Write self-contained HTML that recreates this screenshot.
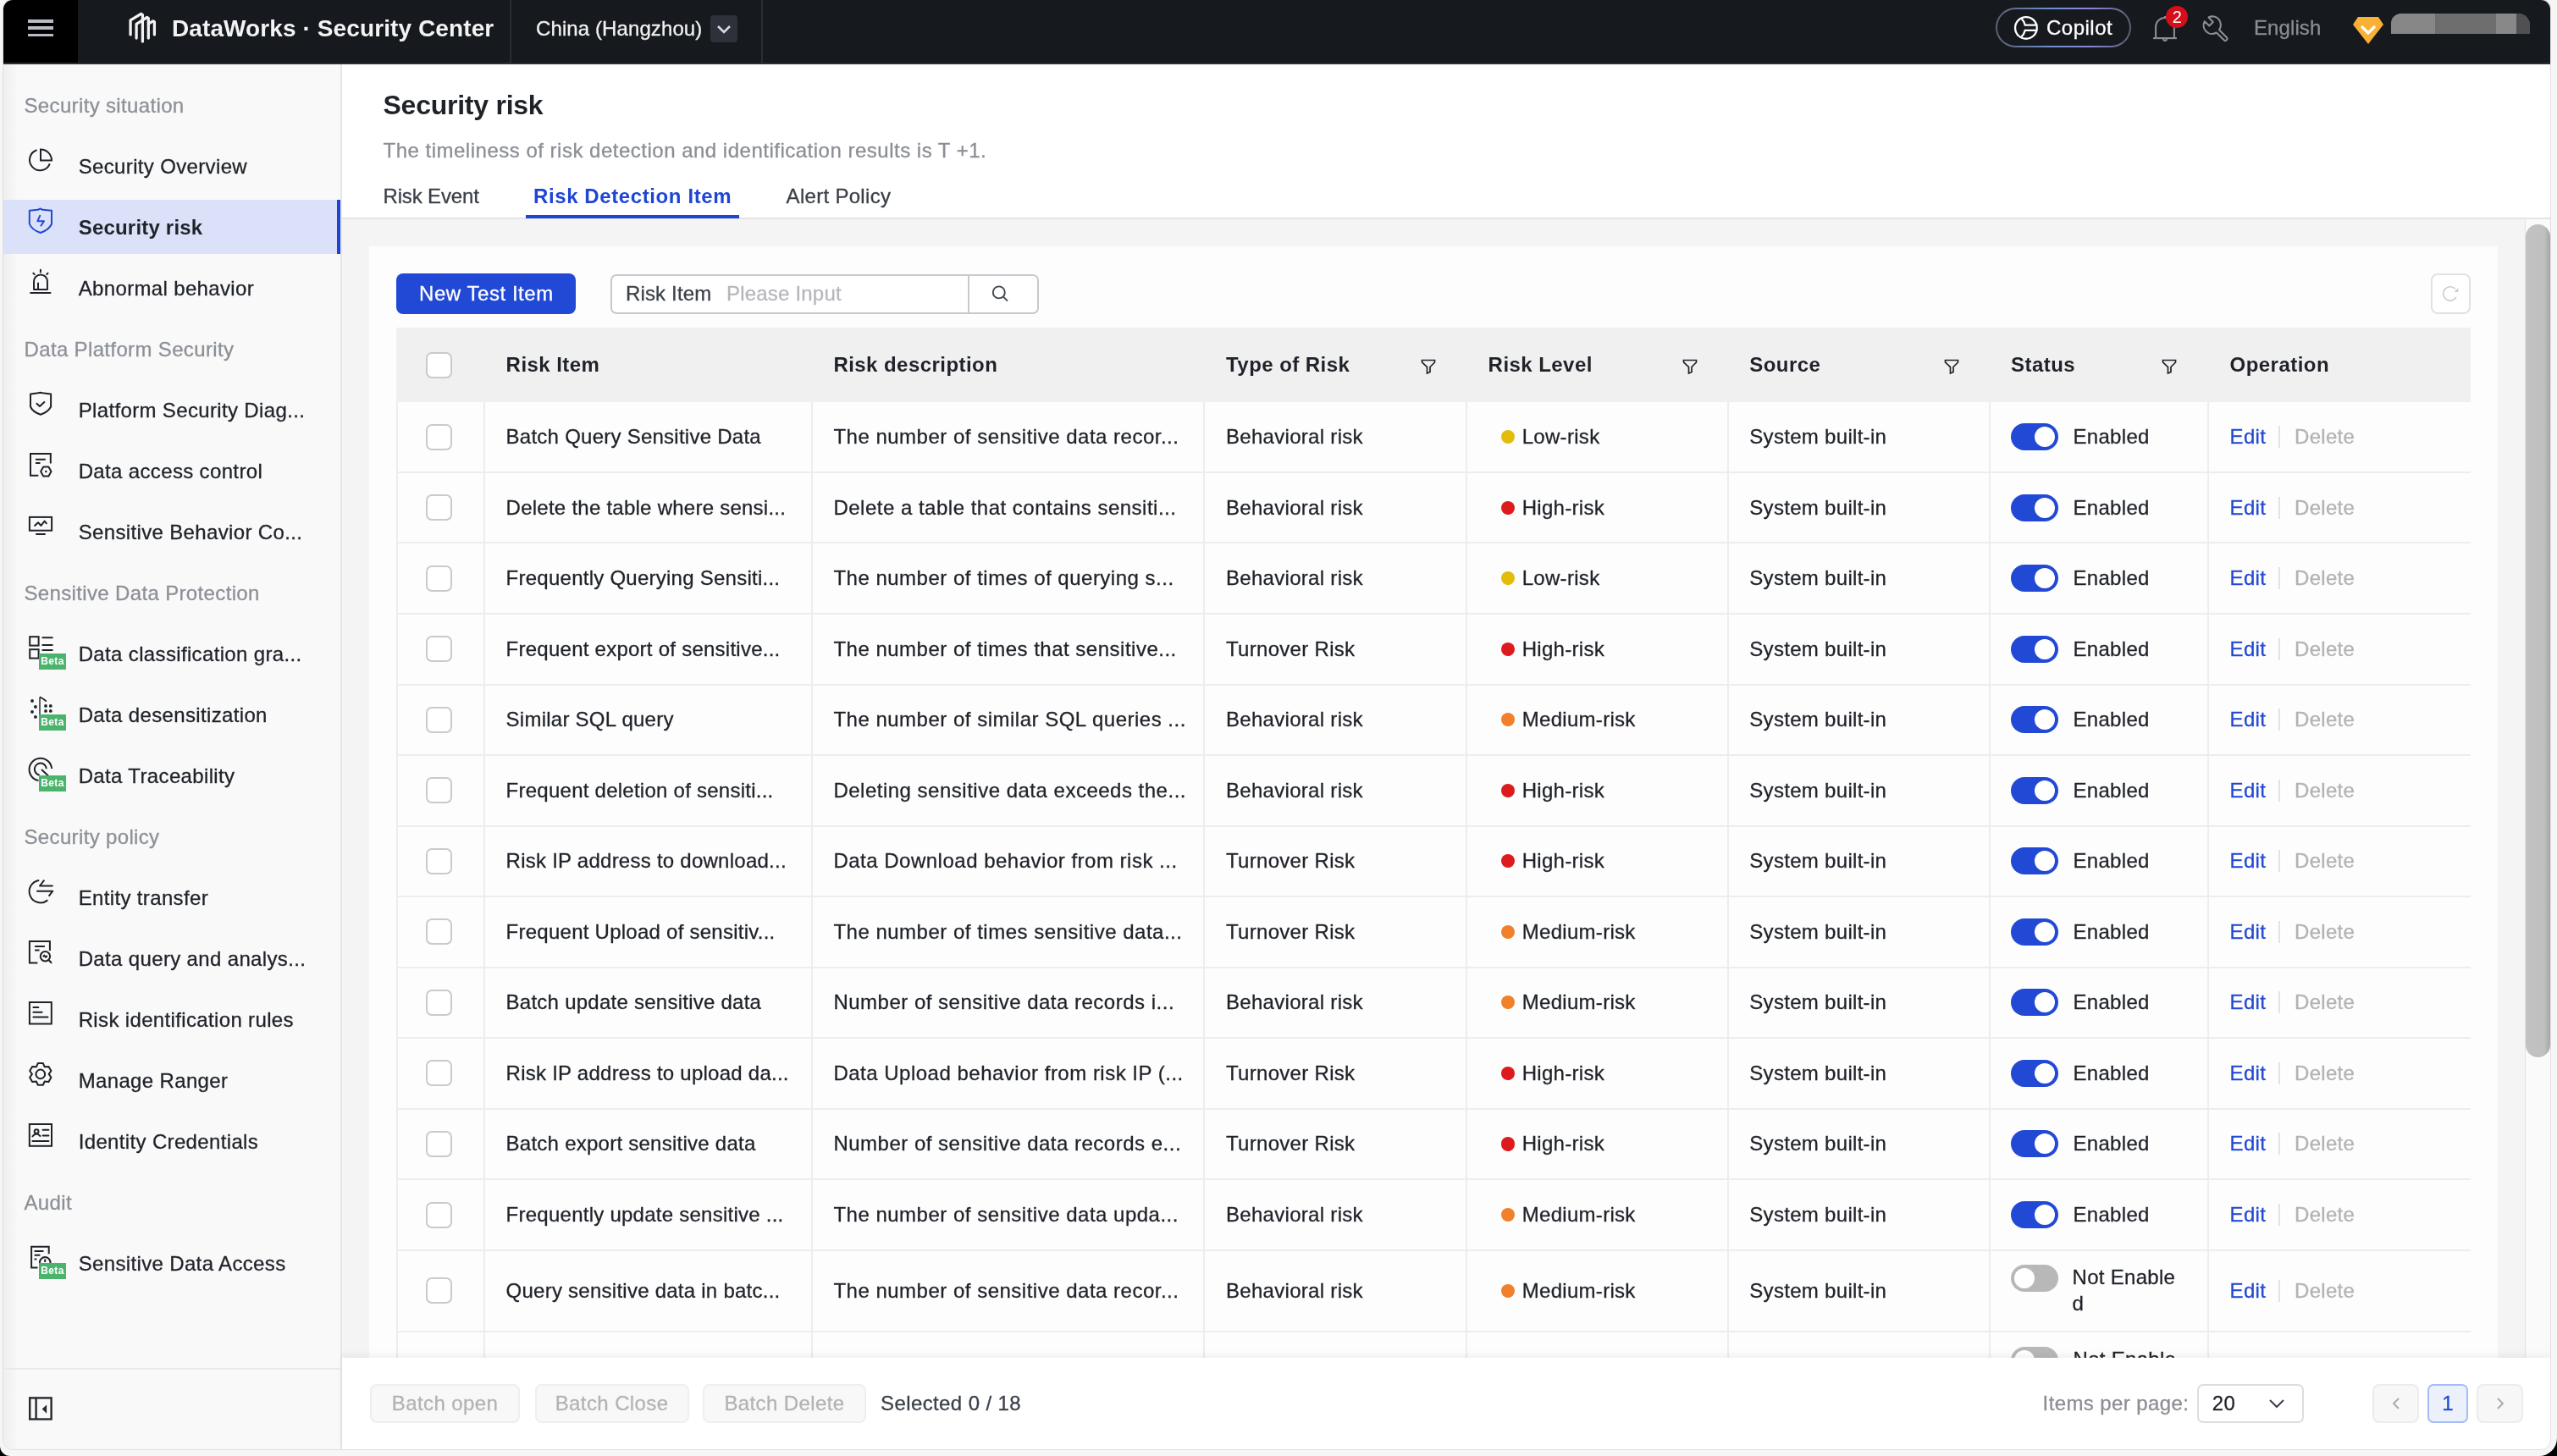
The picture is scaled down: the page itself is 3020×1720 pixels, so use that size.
<!DOCTYPE html><html><head><meta charset="utf-8"><title>DataWorks Security Center</title><style>
*{box-sizing:border-box;margin:0;padding:0}
html,body{width:3020px;height:1720px;overflow:hidden;background:#000;font-family:"Liberation Sans",sans-serif;color:#1f2329}
.a{position:absolute}
.frame{position:absolute;left:0;top:0;width:3020px;height:1720px;background:#f6f6f6;border-radius:0 0 21px 12px}
.wedge{position:absolute;left:3px;top:-2px;width:3010px;height:1715px;border-radius:12px;border:1px solid rgba(0,0,0,.09)}
.win{position:absolute;left:0;top:0;width:3012px;height:1712px;background:#fff;clip-path:inset(0 0 0 4px round 11px);overflow:hidden;will-change:transform}
.t{position:absolute;white-space:nowrap;line-height:30px;height:30px;-webkit-text-stroke:.3px currentColor}
.t.b{-webkit-text-stroke:0}
.top{position:absolute;left:0;top:0;width:3012px;height:76px;background:#16191e;border-bottom:2px solid #2b2e34}
.side{position:absolute;left:4px;top:76px;width:400px;height:1636px;background:#f9f9f9;border-right:2px solid #e4e5e8}
.s24{font-size:24px;letter-spacing:.35px}
.hd{color:#8c9097}
.it{color:#1f2329}
.main{position:absolute;left:403px;top:76px;width:2609px;height:1636px;background:#f4f4f4}
.card{position:absolute;left:436px;top:291px;width:2514px;height:1400px;background:#fdfdfd}
.row{position:absolute;left:468px;width:2450px;border-bottom:2px solid #ededed;border-left:2px solid #ededed}
.vl{position:absolute;top:0;bottom:0;width:2px;background:#ededed}
.cb{position:absolute;width:31px;height:31px;border:2px solid #c8cad0;border-radius:7px;background:#fff}
.tog{position:absolute;width:56px;height:32px;border-radius:16px;background:#2249d5}
.tog:after{content:"";position:absolute;top:4px;left:28px;width:24px;height:24px;border-radius:12px;background:#fff}
.tog.off{background:#b8b8b8}
.tog.off:after{left:4px}
.dot{position:absolute;width:16.2px;height:16.2px;border-radius:9px}
.low{background:#e2bc09}.high{background:#dd1a1e}.med{background:#f0802a}
.edit{color:#2249d5}.del{color:#b3b3b3}
.sep{position:absolute;width:2px;height:26px;background:#e3e3e3}
.btn{position:absolute;border:2px solid #eeeeee;background:#f8f8f8;border-radius:8px;color:#b4b4b4}
</style></head><body>
<div class="frame"></div><div class="wedge"></div><div class="win">
<div class="top">
<div class="a" style="left:0;top:0;width:92px;height:74px;background:#000"></div>
<div class="a" style="left:33px;top:23px;width:30px;height:3.5px;background:#b9bdc3"></div>
<div class="a" style="left:33px;top:31px;width:30px;height:3.5px;background:#b9bdc3"></div>
<div class="a" style="left:33px;top:39.5px;width:30px;height:3.5px;background:#b9bdc3"></div>
<svg class="a" style="left:140px;top:6px" width="54" height="50" viewBox="140 6 54 50" fill="none" stroke="#f2f2f2" stroke-width="3.3" stroke-linecap="round" stroke-linejoin="round">
<path d="M154.1 40.9 V23.8 L166.6 16.3 L168.4 17.6 V49.1"/><path d="M161.1 45 V28.4 L168.4 24"/><path d="M168.4 23.8 L173.6 20.5 L175.3 21.6 V45"/><path d="M175.3 28.2 L180.8 24.8 L182.4 25.8 V40.9"/></svg>
<div class="t s24 b" style="left:203px;top:16.00px;line-height:36px;height:36px;font-size:28px;font-weight:bold;color:#f3f3f3;letter-spacing:.1px">DataWorks · Security Center</div>
<div class="a" style="left:602px;top:0;width:2px;height:74px;background:#2a2d33"></div>
<div class="t s24" style="left:633px;top:18.50px;line-height:30px;height:30px;font-size:24px;color:#f2f2f2;letter-spacing:.1px">China (Hangzhou)</div>
<div class="a" style="left:839px;top:18px;width:32px;height:32px;background:#2d3139;border-radius:4px"></div>
<svg class="a" style="left:839px;top:18px" width="32" height="32" viewBox="0 0 32 32" fill="none" stroke="#d9dadd" stroke-width="2.6"><path d="M9 13 L16 20 L23 13"/></svg>
<div class="a" style="left:899px;top:0;width:2px;height:74px;background:#2a2d33"></div>
<div class="a" style="left:2357px;top:9px;width:160px;height:47px;border-radius:24px;background:linear-gradient(90deg,#5a6070,#6f8fd0 40%,#8b86d8 70%,#5a6070);"></div>
<div class="a" style="left:2359px;top:11px;width:156px;height:43px;border-radius:22px;background:#16191e"></div>
<svg class="a" style="left:2370px;top:12px" width="50" height="42" viewBox="2370 12 50 42" fill="none" stroke="#fff" stroke-width="2.3"><circle cx="2392.9" cy="32.9" r="12.85"/><path d="M2387.6 22 A15.5 15.5 0 0 1 2391.7 29.6 H2406.2 M2406.2 35.9 H2391.7 A15.5 15.5 0 0 1 2387.4 43.4"/></svg>
<div class="t s24" style="left:2417px;top:18.00px;line-height:30px;height:30px;font-size:24px;color:#fff;letter-spacing:.5px">Copilot</div>
<svg class="a" style="left:2535px;top:4px" width="105" height="52" viewBox="2535 4 105 52" fill="none" stroke="#8a8e95" stroke-width="2.1"><path d="M2546.1 44.7 V31.8 A10.9 10.9 0 0 1 2567.9 31.8 V44.7"/><path d="M2543 45.1 H2570.9"/><path d="M2555.1 46 A1.9 1.9 0 0 0 2558.9 46"/><path d="M2557 19 V21"/>
<path d="M2608.5 20.4 L2613.8 25.9 L2609.3 30.5 L2603.8 25.2 A10 10 0 0 0 2617.75 38.5 L2626.9 47.6 A2.3 2.3 0 0 0 2630.1 44.4 L2621 35.25 A10 10 0 0 0 2608.5 20.4 Z" stroke-linejoin="round"/></svg>
<div class="a" style="left:2558.2px;top:7.1px;width:25.8px;height:25.8px;border-radius:13px;background:#d50f1a;color:#fff;font-size:20px;line-height:26px;text-align:center;text-indent:0.5px">2</div>
<div class="t s24" style="left:2662px;top:18.00px;line-height:30px;height:30px;font-size:24px;color:#8a8d93;letter-spacing:.1px">English</div>
<svg class="a" style="left:2778px;top:19px" width="38" height="34" viewBox="0 0 38 34"><path d="M7 1 H31 L37 10 L19 33 L1 10 Z" fill="#f9b035"/><path d="M11 12 L19 20 L27 12" fill="none" stroke="#fff" stroke-width="3.2"/></svg>
<div class="a" style="left:2824px;top:15.5px;width:164px;height:24.5px;border-radius:12px 14px 0 0;overflow:hidden;background:#6f7072"><div class="a" style="left:0;top:0;width:52px;height:25px;background:#878787"></div><div class="a" style="left:52px;top:0;width:72px;height:25px;background:#6e6e6f"></div><div class="a" style="left:124px;top:0;width:24px;height:25px;background:#888"></div><div class="a" style="left:148px;top:0;width:16px;height:25px;background:#505052"></div></div>
</div>
<div class="side"></div>
<div class="a" style="left:4px;top:76px;width:18px;height:1636px;background:linear-gradient(90deg,rgba(0,0,0,.045),rgba(0,0,0,0))"></div>
<div class="t s24 hd" style="left:28.5px;top:109.50px;line-height:30px;height:30px;">Security situation</div>
<div class="t s24 it" style="left:92.7px;top:181.50px;line-height:30px;height:30px;">Security Overview</div>
<div class="a" style="left:4px;top:235.9px;width:394px;height:64px;background:#dae1f8"></div>
<div class="a" style="left:398px;top:235.9px;width:4.3px;height:64px;background:#1f43d3"></div>
<div class="t s24 b" style="left:92.7px;top:253.50px;line-height:30px;height:30px;font-weight:bold;color:#1f2329;letter-spacing:.2px">Security risk</div>
<div class="t s24 it" style="left:92.7px;top:325.50px;line-height:30px;height:30px;">Abnormal behavior</div>
<div class="t s24 hd" style="left:28.5px;top:397.50px;line-height:30px;height:30px;">Data Platform Security</div>
<div class="t s24 it" style="left:92.7px;top:469.50px;line-height:30px;height:30px;">Platform Security Diag...</div>
<div class="t s24 it" style="left:92.7px;top:541.50px;line-height:30px;height:30px;">Data access control</div>
<div class="t s24 it" style="left:92.7px;top:613.50px;line-height:30px;height:30px;">Sensitive Behavior Co...</div>
<div class="t s24 hd" style="left:28.5px;top:685.50px;line-height:30px;height:30px;">Sensitive Data Protection</div>
<div class="t s24 it" style="left:92.7px;top:757.50px;line-height:30px;height:30px;">Data classification gra...</div>
<div class="t s24 it" style="left:92.7px;top:829.50px;line-height:30px;height:30px;">Data desensitization</div>
<div class="t s24 it" style="left:92.7px;top:901.50px;line-height:30px;height:30px;">Data Traceability</div>
<div class="t s24 hd" style="left:28.5px;top:973.50px;line-height:30px;height:30px;">Security policy</div>
<div class="t s24 it" style="left:92.7px;top:1045.50px;line-height:30px;height:30px;">Entity transfer</div>
<div class="t s24 it" style="left:92.7px;top:1117.50px;line-height:30px;height:30px;">Data query and analys...</div>
<div class="t s24 it" style="left:92.7px;top:1189.50px;line-height:30px;height:30px;">Risk identification rules</div>
<div class="t s24 it" style="left:92.7px;top:1261.50px;line-height:30px;height:30px;">Manage Ranger</div>
<div class="t s24 it" style="left:92.7px;top:1333.50px;line-height:30px;height:30px;">Identity Credentials</div>
<div class="t s24 hd" style="left:28.5px;top:1405.50px;line-height:30px;height:30px;">Audit</div>
<div class="t s24 it" style="left:92.7px;top:1477.50px;line-height:30px;height:30px;">Sensitive Data Access</div>
<svg class="a" style="left:0;top:0" width="100" height="1712" viewBox="0 0 100 1712" fill="none" stroke="#1f2329" stroke-width="2" stroke-linejoin="round">
<path d="M43.56 177.18 A12.3 12.3 0 1 0 58.78 193.3"/>
<path d="M48 176.6 V189.6 H61 A13 13 0 0 0 48 176.6 Z" stroke-linejoin="miter"/>
<g stroke="#2249d5"><path d="M34.8 248.8 L44.7 247.8 L47.6 246.5 L50.3 247.8 L61 248.8 V264.5 Q58 271.5 47.8 275 Q37.5 271.5 34.8 264.5 Z"/><path d="M47.5 254.2 L44.4 261.2 H52 L48 267.2"/></g>
<path d="M40.05 342 V332.4 A7.95 7.95 0 0 1 55.95 332.4 V342 Z M45 334.6 V342 M36.1 346 H59.5 M47.9 318.8 V321.4 M39.4 322.8 L40.7 324.1 M56.5 322.8 L55.2 324.1" stroke-linecap="round"/>
<path d="M36 465.4 L45 464.3 L47.6 463.7 L50.3 464.3 L60.1 465.4 V480.5 Q57 486.5 47.9 489.8 Q38.6 486.5 36 480.5 Z"/>
<path d="M42.9 476.2 L46.9 479.9 L52.9 474.4"/>
<path d="M45.3 561.8 H36 V535.9 H59.8 V547.6 M42 542.7 H53.8 M42 546.9 H47.5" stroke-linejoin="miter"/>
<path d="M60.5 557 L57.4 562.4 L51.2 562.4 L48.1 557 L51.2 551.6 L57.4 551.6 Z"/>
<circle cx="54.3" cy="557" r="1.3" fill="#1f2329" stroke="none"/>
<rect x="34.9" y="610.9" width="26.2" height="15.8" stroke-linejoin="miter"/>
<path d="M42.2 631 H53.7 M40.5 621.5 L45 617.2 L48.4 620.9 L52.6 615.6 L55.3 618.9"/>
<rect x="35.2" y="752.2" width="10.4" height="10.4" stroke-linejoin="miter"/><rect x="35.2" y="767.2" width="10.4" height="10.4" stroke-linejoin="miter"/>
<path d="M50.3 753.3 H61.8 M50.3 761.9 H61.8 M50.3 768.1 H61.8" stroke-linecap="round"/>
<g fill="#1f2329" stroke="none"><circle cx="38" cy="828" r="1.9"/><circle cx="41.9" cy="835" r="1.9"/><circle cx="38" cy="840.9" r="1.9"/><circle cx="41.9" cy="846.9" r="1.9"/><circle cx="54" cy="833.9" r="1.9"/><circle cx="59.8" cy="833.9" r="1.9"/><circle cx="54" cy="839.9" r="1.9"/><circle cx="59.8" cy="839.9" r="1.9"/></g>
<path d="M47 823.4 V850" stroke="#44474d" stroke-width="1.7"/><path d="M47 823.4 L49.5 824.8 L52 826.2 L54.8 828.6" stroke-width="1.8"/>
<path d="M61.1 908 A13.3 13.3 0 1 0 45.5 922.1 M54.8 908.2 A7 7 0 1 0 46.6 915.5 M49 909 L57 916.5"/>
<path d="M46.2 1039.9 A13.3 13.3 0 1 0 56.3 1063.4 M62.6 1046.5 H47 L52.3 1039.7 M43.2 1052.7 H62.3 L57.6 1058.7"/>
<path d="M44.4 1137.5 H34.9 V1112 H58.9 V1122.9 M41.1 1118 H52.9 M41.1 1122.4 H46.5" stroke-linejoin="miter"/>
<circle cx="53.4" cy="1129.8" r="5.7"/><path d="M57.5 1134 L61 1137.8 M50.8 1130.2 L52.2 1128.6 L54 1130.8 L55.8 1129" />
<rect x="34.9" y="1184" width="25.9" height="25.5" stroke-linejoin="miter"/><path d="M39.4 1189.9 H45.3 M39.4 1195.8 H49.6 M39.4 1201.5 H56.5" stroke-linecap="round"/>
<path d="M44.83 1256.04 L50.77 1256.04 L52.75 1260.33 L57.45 1259.90 L60.42 1265.04 L57.70 1268.90 L60.42 1272.76 L57.45 1277.90 L52.75 1277.47 L50.77 1281.76 L44.83 1281.76 L42.85 1277.47 L38.15 1277.90 L35.18 1272.76 L37.90 1268.90 L35.18 1265.04 L38.15 1259.90 L42.85 1260.33 Z"/><circle cx="47.8" cy="1268.9" r="5.3"/>
<rect x="34.8" y="1328" width="26.2" height="25.8" stroke-linejoin="miter"/><circle cx="43.1" cy="1336.6" r="2.4"/>
<path d="M38.4 1342.4 Q43 1337 47.4 1342 M50.5 1334.7 H57.4 M50.5 1341.5 H57.4 M38.4 1348.1 H57.4" stroke-linecap="round"/>
<path d="M44.5 1497.4 H37.1 V1472.7 H57.7 V1481.3 M40.6 1478 H51.5 M40.6 1482.7 H47.4 M40.6 1487.5 H43.3" stroke-linejoin="miter"/>
<circle cx="53.2" cy="1491.4" r="6.3"/><path d="M53.2 1487.4 V1491"/>
</svg>
<div class="a" style="left:46.2px;top:772.2px;width:32px;height:18.6px;background:#4bb46c;color:#fff;font-size:12px;font-weight:bold;line-height:18.6px;letter-spacing:.4px;text-indent:2px">Beta</div>
<div class="a" style="left:46.2px;top:844.2px;width:32px;height:18.6px;background:#4bb46c;color:#fff;font-size:12px;font-weight:bold;line-height:18.6px;letter-spacing:.4px;text-indent:2px">Beta</div>
<div class="a" style="left:46.2px;top:916.2px;width:32px;height:18.6px;background:#4bb46c;color:#fff;font-size:12px;font-weight:bold;line-height:18.6px;letter-spacing:.4px;text-indent:2px">Beta</div>
<div class="a" style="left:46.2px;top:1492.2px;width:32px;height:18.6px;background:#4bb46c;color:#fff;font-size:12px;font-weight:bold;line-height:18.6px;letter-spacing:.4px;text-indent:2px">Beta</div>
<div class="a" style="left:4px;top:1616px;width:398px;height:2px;background:#eaeaea"></div>
<svg class="a" style="left:0;top:1640px" width="80" height="50" viewBox="0 1640 80 50" fill="none" stroke="#25282e" stroke-width="2.4"><rect x="35.2" y="1651.4" width="25.4" height="25.1"/><path d="M42.6 1651.4 V1676.5"/><path d="M49.7 1664.4 L55.1 1659.6 V1669.7 Z" fill="#25282e" stroke="none"/></svg>
<div class="a" style="left:404px;top:76px;width:2608px;height:182px;background:#fff"></div>
<div class="a" style="left:404px;top:257px;width:2608px;height:2px;background:#e4e4e4"></div>
<div class="a" style="left:404px;top:259px;width:2578px;height:1345px;background:#f4f4f4"></div>
<div class="t s24 b" style="left:452.5px;top:104.40px;line-height:40px;height:40px;font-size:32px;font-weight:bold;color:#1f2329;letter-spacing:-.25px">Security risk</div>
<div class="t s24" style="left:452.5px;top:163.00px;line-height:30px;height:30px;color:#8b8e95;letter-spacing:.5px">The timeliness of risk detection and identification results is T +1.</div>
<div class="t s24" style="left:452.5px;top:216.50px;line-height:30px;height:30px;color:#3a3f48;letter-spacing:-.15px">Risk Event</div>
<div class="t s24 b" style="left:630px;top:216.50px;line-height:30px;height:30px;font-weight:bold;color:#1f45d5;letter-spacing:.6px">Risk Detection Item</div>
<div class="t s24" style="left:928.6px;top:216.50px;line-height:30px;height:30px;color:#3a3f48;letter-spacing:.3px">Alert Policy</div>
<div class="a" style="left:621px;top:254px;width:252px;height:3.5px;background:#1f45d5"></div>
<div class="a" style="left:2982px;top:259px;width:30px;height:1345px;background:#fafafa;border-left:1.5px solid #e2e2e2"></div>
<div class="a" style="left:2983px;top:265px;width:29px;height:984px;border-radius:15px;background:linear-gradient(90deg,#c2c2c2 0%,#c0c0c0 75%,#a6a6a6 100%)"></div>
<div class="a" style="left:436px;top:291px;width:2514px;height:1313px;background:#fdfdfd"></div>
<div class="a" style="left:468px;top:323px;width:212px;height:48px;border-radius:8px;background:#2249d5"></div>
<div class="t s24" style="left:495px;top:332.00px;line-height:30px;height:30px;color:#fff;letter-spacing:.55px">New Test Item</div>
<div class="a" style="left:721px;top:324px;width:506px;height:47px;border:2px solid #c7c9cf;border-radius:7px;background:#fff"></div>
<div class="a" style="left:1143px;top:324px;width:2px;height:47px;background:#c7c9cf"></div>
<div class="t s24" style="left:739px;top:332.00px;line-height:30px;height:30px;color:#3c414a;letter-spacing:.15px">Risk Item</div>
<div class="t s24" style="left:858px;top:332.00px;line-height:30px;height:30px;color:#b5b7bc;letter-spacing:.2px">Please Input</div>
<svg class="a" style="left:1168px;top:334px" width="26" height="26" viewBox="0 0 26 26" fill="none" stroke="#414651" stroke-width="1.9"><circle cx="11.8" cy="11.4" r="7"/><path d="M16.8 16.4 L22 21.6"/></svg>
<div class="a" style="left:2870.5px;top:323.3px;width:47.3px;height:47.3px;border:2px solid #e0e1e4;border-radius:8px;background:#fff"></div>
<svg class="a" style="left:2880px;top:333px" width="30" height="30" viewBox="2880 333 30 30" fill="none" stroke="#c9cbd0" stroke-width="1.6"><path d="M2899.7 341.1 A8.2 8.2 0 1 0 2901 351"/><path d="M2898.4 345.1 L2903.3 340.3 L2903.3 345.1 Z" fill="#c9cbd0" stroke="none"/></svg>
<div class="a" style="left:468px;top:387px;width:2450px;height:88px;background:#f0f0f0"></div>
<div class="cb" style="left:502.5px;top:415.5px"></div>
<div class="t s24 b" style="left:597.6px;top:416.00px;line-height:30px;height:30px;font-weight:bold;color:#1f2329;letter-spacing:.45px">Risk Item</div>
<div class="t s24 b" style="left:984.4px;top:416.00px;line-height:30px;height:30px;font-weight:bold;color:#1f2329;letter-spacing:.45px">Risk description</div>
<div class="t s24 b" style="left:1448px;top:416.00px;line-height:30px;height:30px;font-weight:bold;color:#1f2329;letter-spacing:.45px">Type of Risk</div>
<div class="t s24 b" style="left:1757.6px;top:416.00px;line-height:30px;height:30px;font-weight:bold;color:#1f2329;letter-spacing:.45px">Risk Level</div>
<div class="t s24 b" style="left:2066.3px;top:416.00px;line-height:30px;height:30px;font-weight:bold;color:#1f2329;letter-spacing:.45px">Source</div>
<div class="t s24 b" style="left:2375px;top:416.00px;line-height:30px;height:30px;font-weight:bold;color:#1f2329;letter-spacing:.45px">Status</div>
<div class="t s24 b" style="left:2633.6px;top:416.00px;line-height:30px;height:30px;font-weight:bold;color:#1f2329;letter-spacing:.45px">Operation</div>
<svg class="a" style="left:1677px;top:423px" width="20" height="20" viewBox="0 0 20 20" fill="none" stroke="#1f2329" stroke-width="1.7" stroke-linejoin="miter"><path d="M2.5 2.5 H17.5 V5 L12 10.5 V16.5 L8.5 18 V10.5 L2.5 5 Z"/></svg>
<svg class="a" style="left:1986px;top:423px" width="20" height="20" viewBox="0 0 20 20" fill="none" stroke="#1f2329" stroke-width="1.7" stroke-linejoin="miter"><path d="M2.5 2.5 H17.5 V5 L12 10.5 V16.5 L8.5 18 V10.5 L2.5 5 Z"/></svg>
<svg class="a" style="left:2295px;top:423px" width="20" height="20" viewBox="0 0 20 20" fill="none" stroke="#1f2329" stroke-width="1.7" stroke-linejoin="miter"><path d="M2.5 2.5 H17.5 V5 L12 10.5 V16.5 L8.5 18 V10.5 L2.5 5 Z"/></svg>
<svg class="a" style="left:2552px;top:423px" width="20" height="20" viewBox="0 0 20 20" fill="none" stroke="#1f2329" stroke-width="1.7" stroke-linejoin="miter"><path d="M2.5 2.5 H17.5 V5 L12 10.5 V16.5 L8.5 18 V10.5 L2.5 5 Z"/></svg>
<div class="a" style="left:0;top:0;width:3012px;height:1604px;overflow:hidden">
<div class="a" style="left:468px;top:475.40px;width:2450px;height:81.53px;background:#fdfdfd"></div>
<div class="a" style="left:468px;top:556.93px;width:2450px;height:2px;background:#ededed"></div>
<div class="cb" style="left:502.5px;top:500.66px"></div>
<div class="t s24" style="left:597.6px;top:501.16px;line-height:30px;height:30px;color:#1f2329;letter-spacing:.25px">Batch Query Sensitive Data</div>
<div class="t s24" style="left:984.4px;top:501.16px;line-height:30px;height:30px;color:#1f2329;letter-spacing:.5px">The number of sensitive data recor...</div>
<div class="t s24" style="left:1448px;top:501.16px;line-height:30px;height:30px;color:#1f2329;letter-spacing:.3px">Behavioral risk</div>
<div class="dot low" style="left:1772.9px;top:508.06px"></div>
<div class="t s24" style="left:1797.7px;top:501.16px;line-height:30px;height:30px;color:#1f2329;letter-spacing:.3px">Low-risk</div>
<div class="t s24" style="left:2066.3px;top:501.16px;line-height:30px;height:30px;color:#1f2329;letter-spacing:.3px">System built-in</div>
<div class="tog" style="left:2375px;top:500.16px"></div>
<div class="t s24" style="left:2448.5px;top:501.16px;line-height:30px;height:30px;color:#1f2329;letter-spacing:.3px">Enabled</div>
<div class="t s24 edit" style="left:2633.6px;top:501.16px;line-height:30px;height:30px;letter-spacing:.3px">Edit</div>
<div class="sep" style="left:2691px;top:503.16px"></div>
<div class="t s24 del" style="left:2710px;top:501.16px;line-height:30px;height:30px;letter-spacing:.3px">Delete</div>
<div class="a" style="left:468px;top:558.93px;width:2450px;height:81.53px;background:#fdfdfd"></div>
<div class="a" style="left:468px;top:640.46px;width:2450px;height:2px;background:#ededed"></div>
<div class="cb" style="left:502.5px;top:584.19px"></div>
<div class="t s24" style="left:597.6px;top:584.69px;line-height:30px;height:30px;color:#1f2329;letter-spacing:.25px">Delete the table where sensi...</div>
<div class="t s24" style="left:984.4px;top:584.69px;line-height:30px;height:30px;color:#1f2329;letter-spacing:.5px">Delete a table that contains sensiti...</div>
<div class="t s24" style="left:1448px;top:584.69px;line-height:30px;height:30px;color:#1f2329;letter-spacing:.3px">Behavioral risk</div>
<div class="dot high" style="left:1772.9px;top:591.59px"></div>
<div class="t s24" style="left:1797.7px;top:584.69px;line-height:30px;height:30px;color:#1f2329;letter-spacing:.3px">High-risk</div>
<div class="t s24" style="left:2066.3px;top:584.69px;line-height:30px;height:30px;color:#1f2329;letter-spacing:.3px">System built-in</div>
<div class="tog" style="left:2375px;top:583.69px"></div>
<div class="t s24" style="left:2448.5px;top:584.69px;line-height:30px;height:30px;color:#1f2329;letter-spacing:.3px">Enabled</div>
<div class="t s24 edit" style="left:2633.6px;top:584.69px;line-height:30px;height:30px;letter-spacing:.3px">Edit</div>
<div class="sep" style="left:2691px;top:586.69px"></div>
<div class="t s24 del" style="left:2710px;top:584.69px;line-height:30px;height:30px;letter-spacing:.3px">Delete</div>
<div class="a" style="left:468px;top:642.46px;width:2450px;height:81.53px;background:#fdfdfd"></div>
<div class="a" style="left:468px;top:723.99px;width:2450px;height:2px;background:#ededed"></div>
<div class="cb" style="left:502.5px;top:667.73px"></div>
<div class="t s24" style="left:597.6px;top:668.23px;line-height:30px;height:30px;color:#1f2329;letter-spacing:.25px">Frequently Querying Sensiti...</div>
<div class="t s24" style="left:984.4px;top:668.23px;line-height:30px;height:30px;color:#1f2329;letter-spacing:.5px">The number of times of querying s...</div>
<div class="t s24" style="left:1448px;top:668.23px;line-height:30px;height:30px;color:#1f2329;letter-spacing:.3px">Behavioral risk</div>
<div class="dot low" style="left:1772.9px;top:675.12px"></div>
<div class="t s24" style="left:1797.7px;top:668.23px;line-height:30px;height:30px;color:#1f2329;letter-spacing:.3px">Low-risk</div>
<div class="t s24" style="left:2066.3px;top:668.23px;line-height:30px;height:30px;color:#1f2329;letter-spacing:.3px">System built-in</div>
<div class="tog" style="left:2375px;top:667.23px"></div>
<div class="t s24" style="left:2448.5px;top:668.23px;line-height:30px;height:30px;color:#1f2329;letter-spacing:.3px">Enabled</div>
<div class="t s24 edit" style="left:2633.6px;top:668.23px;line-height:30px;height:30px;letter-spacing:.3px">Edit</div>
<div class="sep" style="left:2691px;top:670.23px"></div>
<div class="t s24 del" style="left:2710px;top:668.23px;line-height:30px;height:30px;letter-spacing:.3px">Delete</div>
<div class="a" style="left:468px;top:725.99px;width:2450px;height:81.53px;background:#fdfdfd"></div>
<div class="a" style="left:468px;top:807.52px;width:2450px;height:2px;background:#ededed"></div>
<div class="cb" style="left:502.5px;top:751.25px"></div>
<div class="t s24" style="left:597.6px;top:751.75px;line-height:30px;height:30px;color:#1f2329;letter-spacing:.25px">Frequent export of sensitive...</div>
<div class="t s24" style="left:984.4px;top:751.75px;line-height:30px;height:30px;color:#1f2329;letter-spacing:.5px">The number of times that sensitive...</div>
<div class="t s24" style="left:1448px;top:751.75px;line-height:30px;height:30px;color:#1f2329;letter-spacing:.3px">Turnover Risk</div>
<div class="dot high" style="left:1772.9px;top:758.65px"></div>
<div class="t s24" style="left:1797.7px;top:751.75px;line-height:30px;height:30px;color:#1f2329;letter-spacing:.3px">High-risk</div>
<div class="t s24" style="left:2066.3px;top:751.75px;line-height:30px;height:30px;color:#1f2329;letter-spacing:.3px">System built-in</div>
<div class="tog" style="left:2375px;top:750.75px"></div>
<div class="t s24" style="left:2448.5px;top:751.75px;line-height:30px;height:30px;color:#1f2329;letter-spacing:.3px">Enabled</div>
<div class="t s24 edit" style="left:2633.6px;top:751.75px;line-height:30px;height:30px;letter-spacing:.3px">Edit</div>
<div class="sep" style="left:2691px;top:753.75px"></div>
<div class="t s24 del" style="left:2710px;top:751.75px;line-height:30px;height:30px;letter-spacing:.3px">Delete</div>
<div class="a" style="left:468px;top:809.52px;width:2450px;height:81.53px;background:#fdfdfd"></div>
<div class="a" style="left:468px;top:891.05px;width:2450px;height:2px;background:#ededed"></div>
<div class="cb" style="left:502.5px;top:834.78px"></div>
<div class="t s24" style="left:597.6px;top:835.28px;line-height:30px;height:30px;color:#1f2329;letter-spacing:.25px">Similar SQL query</div>
<div class="t s24" style="left:984.4px;top:835.28px;line-height:30px;height:30px;color:#1f2329;letter-spacing:.5px">The number of similar SQL queries ...</div>
<div class="t s24" style="left:1448px;top:835.28px;line-height:30px;height:30px;color:#1f2329;letter-spacing:.3px">Behavioral risk</div>
<div class="dot med" style="left:1772.9px;top:842.18px"></div>
<div class="t s24" style="left:1797.7px;top:835.28px;line-height:30px;height:30px;color:#1f2329;letter-spacing:.3px">Medium-risk</div>
<div class="t s24" style="left:2066.3px;top:835.28px;line-height:30px;height:30px;color:#1f2329;letter-spacing:.3px">System built-in</div>
<div class="tog" style="left:2375px;top:834.28px"></div>
<div class="t s24" style="left:2448.5px;top:835.28px;line-height:30px;height:30px;color:#1f2329;letter-spacing:.3px">Enabled</div>
<div class="t s24 edit" style="left:2633.6px;top:835.28px;line-height:30px;height:30px;letter-spacing:.3px">Edit</div>
<div class="sep" style="left:2691px;top:837.28px"></div>
<div class="t s24 del" style="left:2710px;top:835.28px;line-height:30px;height:30px;letter-spacing:.3px">Delete</div>
<div class="a" style="left:468px;top:893.05px;width:2450px;height:81.53px;background:#fdfdfd"></div>
<div class="a" style="left:468px;top:974.58px;width:2450px;height:2px;background:#ededed"></div>
<div class="cb" style="left:502.5px;top:918.31px"></div>
<div class="t s24" style="left:597.6px;top:918.81px;line-height:30px;height:30px;color:#1f2329;letter-spacing:.25px">Frequent deletion of sensiti...</div>
<div class="t s24" style="left:984.4px;top:918.81px;line-height:30px;height:30px;color:#1f2329;letter-spacing:.5px">Deleting sensitive data exceeds the...</div>
<div class="t s24" style="left:1448px;top:918.81px;line-height:30px;height:30px;color:#1f2329;letter-spacing:.3px">Behavioral risk</div>
<div class="dot high" style="left:1772.9px;top:925.71px"></div>
<div class="t s24" style="left:1797.7px;top:918.81px;line-height:30px;height:30px;color:#1f2329;letter-spacing:.3px">High-risk</div>
<div class="t s24" style="left:2066.3px;top:918.81px;line-height:30px;height:30px;color:#1f2329;letter-spacing:.3px">System built-in</div>
<div class="tog" style="left:2375px;top:917.81px"></div>
<div class="t s24" style="left:2448.5px;top:918.81px;line-height:30px;height:30px;color:#1f2329;letter-spacing:.3px">Enabled</div>
<div class="t s24 edit" style="left:2633.6px;top:918.81px;line-height:30px;height:30px;letter-spacing:.3px">Edit</div>
<div class="sep" style="left:2691px;top:920.81px"></div>
<div class="t s24 del" style="left:2710px;top:918.81px;line-height:30px;height:30px;letter-spacing:.3px">Delete</div>
<div class="a" style="left:468px;top:976.58px;width:2450px;height:81.53px;background:#fdfdfd"></div>
<div class="a" style="left:468px;top:1058.11px;width:2450px;height:2px;background:#ededed"></div>
<div class="cb" style="left:502.5px;top:1001.84px"></div>
<div class="t s24" style="left:597.6px;top:1002.34px;line-height:30px;height:30px;color:#1f2329;letter-spacing:.25px">Risk IP address to download...</div>
<div class="t s24" style="left:984.4px;top:1002.34px;line-height:30px;height:30px;color:#1f2329;letter-spacing:.5px">Data Download behavior from risk ...</div>
<div class="t s24" style="left:1448px;top:1002.34px;line-height:30px;height:30px;color:#1f2329;letter-spacing:.3px">Turnover Risk</div>
<div class="dot high" style="left:1772.9px;top:1009.24px"></div>
<div class="t s24" style="left:1797.7px;top:1002.34px;line-height:30px;height:30px;color:#1f2329;letter-spacing:.3px">High-risk</div>
<div class="t s24" style="left:2066.3px;top:1002.34px;line-height:30px;height:30px;color:#1f2329;letter-spacing:.3px">System built-in</div>
<div class="tog" style="left:2375px;top:1001.34px"></div>
<div class="t s24" style="left:2448.5px;top:1002.34px;line-height:30px;height:30px;color:#1f2329;letter-spacing:.3px">Enabled</div>
<div class="t s24 edit" style="left:2633.6px;top:1002.34px;line-height:30px;height:30px;letter-spacing:.3px">Edit</div>
<div class="sep" style="left:2691px;top:1004.34px"></div>
<div class="t s24 del" style="left:2710px;top:1002.34px;line-height:30px;height:30px;letter-spacing:.3px">Delete</div>
<div class="a" style="left:468px;top:1060.11px;width:2450px;height:81.53px;background:#fdfdfd"></div>
<div class="a" style="left:468px;top:1141.64px;width:2450px;height:2px;background:#ededed"></div>
<div class="cb" style="left:502.5px;top:1085.38px"></div>
<div class="t s24" style="left:597.6px;top:1085.88px;line-height:30px;height:30px;color:#1f2329;letter-spacing:.25px">Frequent Upload of sensitiv...</div>
<div class="t s24" style="left:984.4px;top:1085.88px;line-height:30px;height:30px;color:#1f2329;letter-spacing:.5px">The number of times sensitive data...</div>
<div class="t s24" style="left:1448px;top:1085.88px;line-height:30px;height:30px;color:#1f2329;letter-spacing:.3px">Turnover Risk</div>
<div class="dot med" style="left:1772.9px;top:1092.78px"></div>
<div class="t s24" style="left:1797.7px;top:1085.88px;line-height:30px;height:30px;color:#1f2329;letter-spacing:.3px">Medium-risk</div>
<div class="t s24" style="left:2066.3px;top:1085.88px;line-height:30px;height:30px;color:#1f2329;letter-spacing:.3px">System built-in</div>
<div class="tog" style="left:2375px;top:1084.88px"></div>
<div class="t s24" style="left:2448.5px;top:1085.88px;line-height:30px;height:30px;color:#1f2329;letter-spacing:.3px">Enabled</div>
<div class="t s24 edit" style="left:2633.6px;top:1085.88px;line-height:30px;height:30px;letter-spacing:.3px">Edit</div>
<div class="sep" style="left:2691px;top:1087.88px"></div>
<div class="t s24 del" style="left:2710px;top:1085.88px;line-height:30px;height:30px;letter-spacing:.3px">Delete</div>
<div class="a" style="left:468px;top:1143.64px;width:2450px;height:81.53px;background:#fdfdfd"></div>
<div class="a" style="left:468px;top:1225.17px;width:2450px;height:2px;background:#ededed"></div>
<div class="cb" style="left:502.5px;top:1168.90px"></div>
<div class="t s24" style="left:597.6px;top:1169.40px;line-height:30px;height:30px;color:#1f2329;letter-spacing:.25px">Batch update sensitive data</div>
<div class="t s24" style="left:984.4px;top:1169.40px;line-height:30px;height:30px;color:#1f2329;letter-spacing:.5px">Number of sensitive data records i...</div>
<div class="t s24" style="left:1448px;top:1169.40px;line-height:30px;height:30px;color:#1f2329;letter-spacing:.3px">Behavioral risk</div>
<div class="dot med" style="left:1772.9px;top:1176.31px"></div>
<div class="t s24" style="left:1797.7px;top:1169.40px;line-height:30px;height:30px;color:#1f2329;letter-spacing:.3px">Medium-risk</div>
<div class="t s24" style="left:2066.3px;top:1169.40px;line-height:30px;height:30px;color:#1f2329;letter-spacing:.3px">System built-in</div>
<div class="tog" style="left:2375px;top:1168.40px"></div>
<div class="t s24" style="left:2448.5px;top:1169.40px;line-height:30px;height:30px;color:#1f2329;letter-spacing:.3px">Enabled</div>
<div class="t s24 edit" style="left:2633.6px;top:1169.40px;line-height:30px;height:30px;letter-spacing:.3px">Edit</div>
<div class="sep" style="left:2691px;top:1171.40px"></div>
<div class="t s24 del" style="left:2710px;top:1169.40px;line-height:30px;height:30px;letter-spacing:.3px">Delete</div>
<div class="a" style="left:468px;top:1227.17px;width:2450px;height:81.53px;background:#fdfdfd"></div>
<div class="a" style="left:468px;top:1308.70px;width:2450px;height:2px;background:#ededed"></div>
<div class="cb" style="left:502.5px;top:1252.44px"></div>
<div class="t s24" style="left:597.6px;top:1252.94px;line-height:30px;height:30px;color:#1f2329;letter-spacing:.25px">Risk IP address to upload da...</div>
<div class="t s24" style="left:984.4px;top:1252.94px;line-height:30px;height:30px;color:#1f2329;letter-spacing:.5px">Data Upload behavior from risk IP (...</div>
<div class="t s24" style="left:1448px;top:1252.94px;line-height:30px;height:30px;color:#1f2329;letter-spacing:.3px">Turnover Risk</div>
<div class="dot high" style="left:1772.9px;top:1259.84px"></div>
<div class="t s24" style="left:1797.7px;top:1252.94px;line-height:30px;height:30px;color:#1f2329;letter-spacing:.3px">High-risk</div>
<div class="t s24" style="left:2066.3px;top:1252.94px;line-height:30px;height:30px;color:#1f2329;letter-spacing:.3px">System built-in</div>
<div class="tog" style="left:2375px;top:1251.94px"></div>
<div class="t s24" style="left:2448.5px;top:1252.94px;line-height:30px;height:30px;color:#1f2329;letter-spacing:.3px">Enabled</div>
<div class="t s24 edit" style="left:2633.6px;top:1252.94px;line-height:30px;height:30px;letter-spacing:.3px">Edit</div>
<div class="sep" style="left:2691px;top:1254.94px"></div>
<div class="t s24 del" style="left:2710px;top:1252.94px;line-height:30px;height:30px;letter-spacing:.3px">Delete</div>
<div class="a" style="left:468px;top:1310.70px;width:2450px;height:81.53px;background:#fdfdfd"></div>
<div class="a" style="left:468px;top:1392.23px;width:2450px;height:2px;background:#ededed"></div>
<div class="cb" style="left:502.5px;top:1335.96px"></div>
<div class="t s24" style="left:597.6px;top:1336.46px;line-height:30px;height:30px;color:#1f2329;letter-spacing:.25px">Batch export sensitive data</div>
<div class="t s24" style="left:984.4px;top:1336.46px;line-height:30px;height:30px;color:#1f2329;letter-spacing:.5px">Number of sensitive data records e...</div>
<div class="t s24" style="left:1448px;top:1336.46px;line-height:30px;height:30px;color:#1f2329;letter-spacing:.3px">Turnover Risk</div>
<div class="dot high" style="left:1772.9px;top:1343.37px"></div>
<div class="t s24" style="left:1797.7px;top:1336.46px;line-height:30px;height:30px;color:#1f2329;letter-spacing:.3px">High-risk</div>
<div class="t s24" style="left:2066.3px;top:1336.46px;line-height:30px;height:30px;color:#1f2329;letter-spacing:.3px">System built-in</div>
<div class="tog" style="left:2375px;top:1335.46px"></div>
<div class="t s24" style="left:2448.5px;top:1336.46px;line-height:30px;height:30px;color:#1f2329;letter-spacing:.3px">Enabled</div>
<div class="t s24 edit" style="left:2633.6px;top:1336.46px;line-height:30px;height:30px;letter-spacing:.3px">Edit</div>
<div class="sep" style="left:2691px;top:1338.46px"></div>
<div class="t s24 del" style="left:2710px;top:1336.46px;line-height:30px;height:30px;letter-spacing:.3px">Delete</div>
<div class="a" style="left:468px;top:1394.23px;width:2450px;height:81.53px;background:#fdfdfd"></div>
<div class="a" style="left:468px;top:1475.76px;width:2450px;height:2px;background:#ededed"></div>
<div class="cb" style="left:502.5px;top:1419.50px"></div>
<div class="t s24" style="left:597.6px;top:1420.00px;line-height:30px;height:30px;color:#1f2329;letter-spacing:.25px">Frequently update sensitive ...</div>
<div class="t s24" style="left:984.4px;top:1420.00px;line-height:30px;height:30px;color:#1f2329;letter-spacing:.5px">The number of sensitive data upda...</div>
<div class="t s24" style="left:1448px;top:1420.00px;line-height:30px;height:30px;color:#1f2329;letter-spacing:.3px">Behavioral risk</div>
<div class="dot med" style="left:1772.9px;top:1426.90px"></div>
<div class="t s24" style="left:1797.7px;top:1420.00px;line-height:30px;height:30px;color:#1f2329;letter-spacing:.3px">Medium-risk</div>
<div class="t s24" style="left:2066.3px;top:1420.00px;line-height:30px;height:30px;color:#1f2329;letter-spacing:.3px">System built-in</div>
<div class="tog" style="left:2375px;top:1419.00px"></div>
<div class="t s24" style="left:2448.5px;top:1420.00px;line-height:30px;height:30px;color:#1f2329;letter-spacing:.3px">Enabled</div>
<div class="t s24 edit" style="left:2633.6px;top:1420.00px;line-height:30px;height:30px;letter-spacing:.3px">Edit</div>
<div class="sep" style="left:2691px;top:1422.00px"></div>
<div class="t s24 del" style="left:2710px;top:1420.00px;line-height:30px;height:30px;letter-spacing:.3px">Delete</div>
<div class="a" style="left:468px;top:1477.76px;width:2450px;height:94.00px;background:#fdfdfd"></div>
<div class="a" style="left:468px;top:1571.76px;width:2450px;height:2px;background:#ededed"></div>
<div class="cb" style="left:502.5px;top:1509.26px"></div>
<div class="t s24" style="left:597.6px;top:1509.76px;line-height:30px;height:30px;color:#1f2329;letter-spacing:.25px">Query sensitive data in batc...</div>
<div class="t s24" style="left:984.4px;top:1509.76px;line-height:30px;height:30px;color:#1f2329;letter-spacing:.5px">The number of sensitive data recor...</div>
<div class="t s24" style="left:1448px;top:1509.76px;line-height:30px;height:30px;color:#1f2329;letter-spacing:.3px">Behavioral risk</div>
<div class="dot med" style="left:1772.9px;top:1516.66px"></div>
<div class="t s24" style="left:1797.7px;top:1509.76px;line-height:30px;height:30px;color:#1f2329;letter-spacing:.3px">Medium-risk</div>
<div class="t s24" style="left:2066.3px;top:1509.76px;line-height:30px;height:30px;color:#1f2329;letter-spacing:.3px">System built-in</div>
<div class="tog off" style="left:2375px;top:1494.06px"></div>
<div class="t s24" style="left:2447.5px;top:1494.46px;line-height:30px;height:30px;color:#1f2329;letter-spacing:.3px">Not Enable</div>
<div class="t s24" style="left:2447.5px;top:1525.06px;line-height:30px;height:30px;color:#1f2329;letter-spacing:.3px">d</div>
<div class="t s24 edit" style="left:2633.6px;top:1509.76px;line-height:30px;height:30px;letter-spacing:.3px">Edit</div>
<div class="sep" style="left:2691px;top:1511.76px"></div>
<div class="t s24 del" style="left:2710px;top:1509.76px;line-height:30px;height:30px;letter-spacing:.3px">Delete</div>
<div class="a" style="left:468px;top:1573.76px;width:2450px;height:60px;background:#fdfdfd"></div>
<div class="tog off" style="left:2375px;top:1591.26px"></div>
<div class="t s24" style="left:2448.5px;top:1590.96px;line-height:30px;height:30px;color:#1f2329;letter-spacing:.3px">Not Enable</div>
<div class="a" style="left:468.0px;top:475px;width:2px;height:1200px;background:#ededed"></div>
<div class="a" style="left:571.0px;top:475px;width:2px;height:1200px;background:#ededed"></div>
<div class="a" style="left:958.0px;top:475px;width:2px;height:1200px;background:#ededed"></div>
<div class="a" style="left:1421.0px;top:475px;width:2px;height:1200px;background:#ededed"></div>
<div class="a" style="left:1731.0px;top:475px;width:2px;height:1200px;background:#ededed"></div>
<div class="a" style="left:2040.0px;top:475px;width:2px;height:1200px;background:#ededed"></div>
<div class="a" style="left:2349.0px;top:475px;width:2px;height:1200px;background:#ededed"></div>
<div class="a" style="left:2607.0px;top:475px;width:2px;height:1200px;background:#ededed"></div>
</div>
<div class="a" style="left:404px;top:1604px;width:2608px;height:108px;background:#fff;box-shadow:0 -4px 8px rgba(0,0,0,.05)"></div>
<div class="btn" style="left:437px;top:1635px;width:177px;height:46px"></div>
<div class="t s24" style="left:437px;top:1643px;width:177px;text-align:center;color:#b3b3b3;letter-spacing:.4px">Batch open</div>
<div class="btn" style="left:631.6px;top:1635px;width:182px;height:46px"></div>
<div class="t s24" style="left:631.6px;top:1643px;width:182px;text-align:center;color:#b3b3b3;letter-spacing:.4px">Batch Close</div>
<div class="btn" style="left:830px;top:1635px;width:193px;height:46px"></div>
<div class="t s24" style="left:830px;top:1643px;width:193px;text-align:center;color:#b3b3b3;letter-spacing:.4px">Batch Delete</div>
<div class="t s24" style="left:1040px;top:1643.00px;line-height:30px;height:30px;color:#3b404a;letter-spacing:.4px">Selected 0 / 18</div>
<div class="t s24" style="left:2412.6px;top:1643.00px;line-height:30px;height:30px;color:#8b8e95;letter-spacing:.4px">Items per page:</div>
<div class="a" style="left:2595px;top:1635px;width:126px;height:46px;border:2px solid #dcdde0;border-radius:7px;background:#fff"></div>
<div class="t s24" style="left:2612.8px;top:1643.00px;line-height:30px;height:30px;color:#1f2329">20</div>
<svg class="a" style="left:2678px;top:1648px" width="22" height="20" viewBox="0 0 22 20" fill="none" stroke="#3b404a" stroke-width="2"><path d="M3 6 L11 14 L19 6"/></svg>
<div class="btn" style="left:2802px;top:1635px;width:55px;height:46px;background:#f7f7f7;border-color:#ececec"></div>
<svg class="a" style="left:2820px;top:1648px" width="20" height="20" viewBox="0 0 20 20" fill="none" stroke="#a8a8a8" stroke-width="1.8"><path d="M13 4 L7 10 L13 16"/></svg>
<div class="a" style="left:2867px;top:1635px;width:48px;height:46px;border:2px solid #a6bcf6;border-radius:7px;background:#ebf0fb"></div>
<div class="t s24" style="left:2867px;top:1643.00px;line-height:30px;height:30px;color:#2249d5"><span style="display:block;width:48px;text-align:center">1</span></div>
<div class="btn" style="left:2925px;top:1635px;width:55px;height:46px;background:#f7f7f7;border-color:#ececec"></div>
<svg class="a" style="left:2943px;top:1648px" width="20" height="20" viewBox="0 0 20 20" fill="none" stroke="#a8a8a8" stroke-width="1.8"><path d="M7 4 L13 10 L7 16"/></svg>
</div></body></html>
